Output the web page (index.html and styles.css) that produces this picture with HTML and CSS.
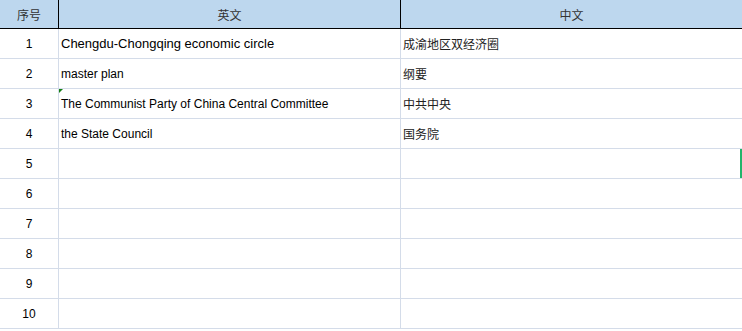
FILE: index.html
```html
<!DOCTYPE html>
<html lang="zh">
<head>
<meta charset="utf-8">
<title>Sheet</title>
<link rel="stylesheet" href="styles.css">
</head>
<body>
<div class="sheet">
  <div class="row head">
    <div class="cell num">序号</div>
    <div class="cell center">英文</div>
    <div class="cell center">中文</div>
  </div>
  <div class="row">
    <div class="cell num">1</div>
    <div class="cell en large">Chengdu-Chongqing economic circle</div>
    <div class="cell zh">成渝地区双经济圈</div>
  </div>
  <div class="row">
    <div class="cell num">2</div>
    <div class="cell en">master plan</div>
    <div class="cell zh">纲要</div>
  </div>
  <div class="row">
    <div class="cell num">3</div>
    <div class="cell en flagged">The Communist Party of China Central Committee</div>
    <div class="cell zh">中共中央</div>
  </div>
  <div class="row">
    <div class="cell num">4</div>
    <div class="cell en">the State Council</div>
    <div class="cell zh">国务院</div>
  </div>
  <div class="row">
    <div class="cell num">5</div>
    <div class="cell en"></div>
    <div class="cell zh cursor"></div>
  </div>
  <div class="row">
    <div class="cell num">6</div>
    <div class="cell en"></div>
    <div class="cell zh"></div>
  </div>
  <div class="row">
    <div class="cell num">7</div>
    <div class="cell en"></div>
    <div class="cell zh"></div>
  </div>
  <div class="row">
    <div class="cell num">8</div>
    <div class="cell en"></div>
    <div class="cell zh"></div>
  </div>
  <div class="row">
    <div class="cell num">9</div>
    <div class="cell en"></div>
    <div class="cell zh"></div>
  </div>
  <div class="row">
    <div class="cell num">10</div>
    <div class="cell en"></div>
    <div class="cell zh"></div>
  </div>
</div>
</body>
</html>
```

FILE: styles.css
```css
html, body {
  margin: 0;
  padding: 0;
  background: #ffffff;
}
body {
  font-family: "Liberation Sans", Arial, "Noto Sans CJK SC", sans-serif;
  font-size: 12px;
  color: #000;
  overflow: hidden;
}
.sheet {
  width: 742px;
}
.row {
  display: grid;
  grid-template-columns: 59px 342px 1fr;
  height: 30px;
}
.cell {
  box-sizing: border-box;
  border-right: 1px solid #d4dce9;
  border-bottom: 1px solid #d4dce9;
  display: flex;
  align-items: center;
  white-space: nowrap;
  overflow: hidden;
  position: relative;
}
.cell:last-child {
  border-right: none;
}
.head {
  height: 29px;
  background: #bdd7ee;
}
.head .cell {
  border-color: #000;
  color: #333;
  justify-content: center;
  font-family: "Noto Sans CJK SC", sans-serif;
  font-size: 12px;
}
.num {
  justify-content: center;
}
.en {
  padding-left: 2px;
}
.large {
  font-size: 13px;
}
.zh {
  padding-left: 2px;
  font-family: "Noto Sans CJK SC", serif;
  color: #222;
}
.flagged::before {
  content: "";
  position: absolute;
  left: 0;
  top: 0;
  border-top: 4px solid #127d12;
  border-right: 4px solid transparent;
}
.cursor::after {
  content: "";
  position: absolute;
  right: 0;
  top: -1px;
  width: 2px;
  height: 31px;
  background: #21b56b;
}
```
